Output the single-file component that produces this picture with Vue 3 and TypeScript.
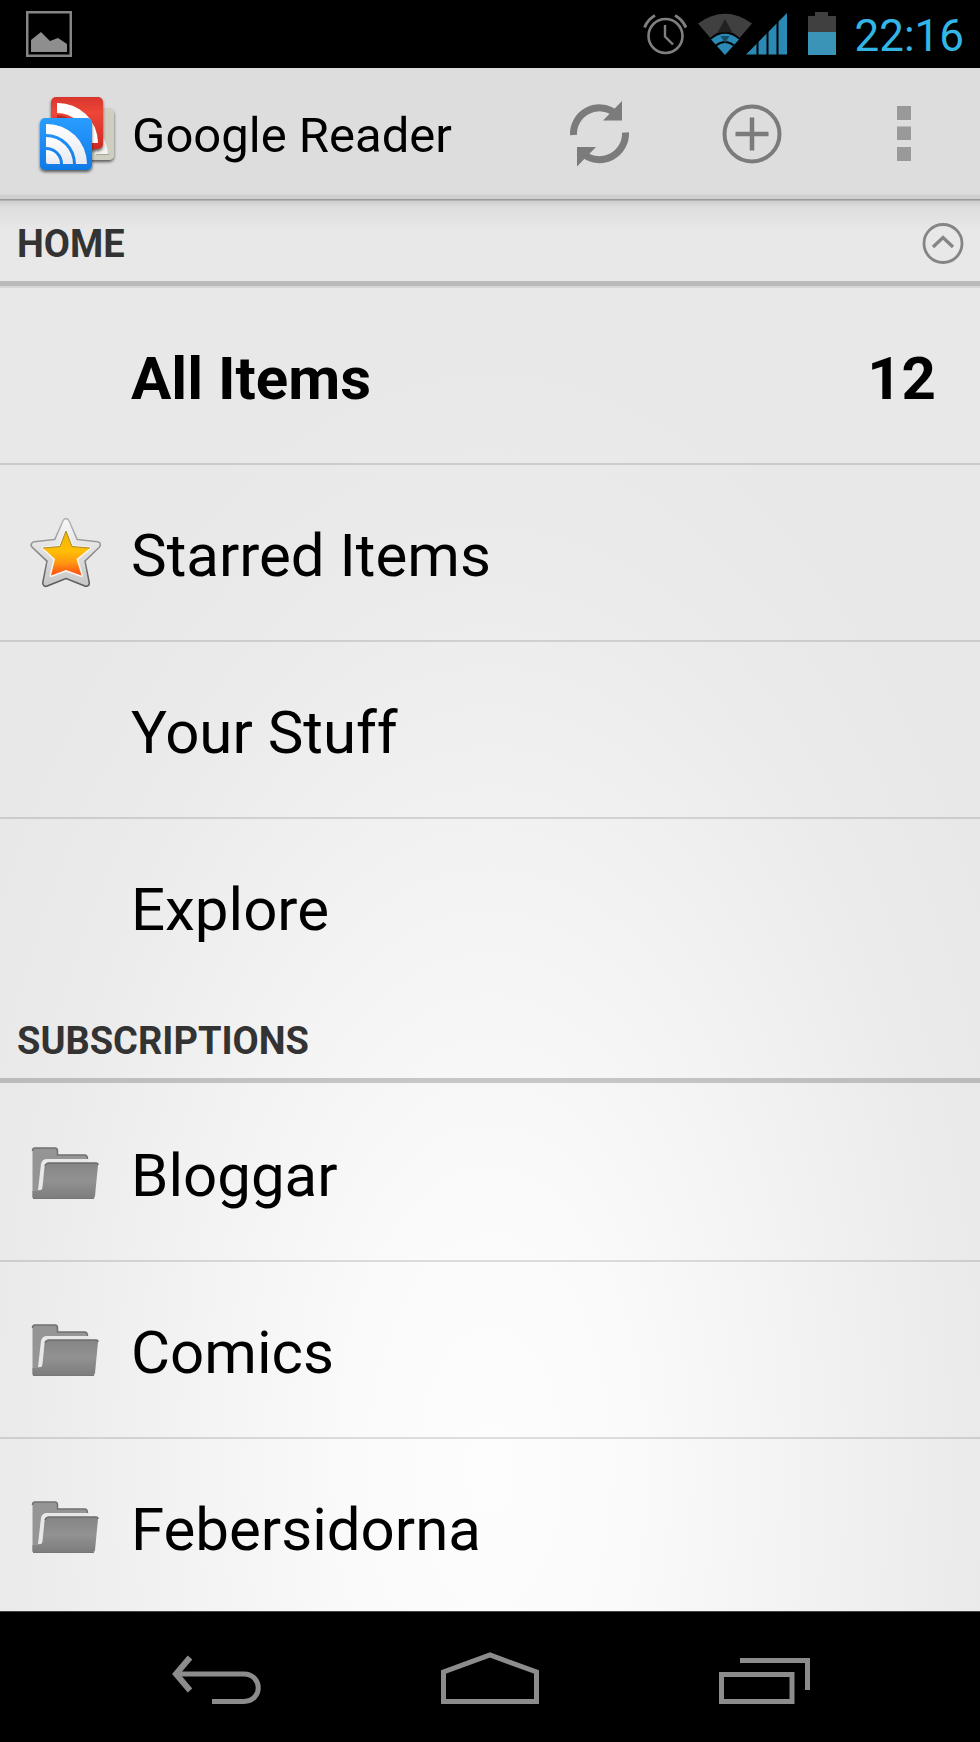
<script setup lang="ts">
interface Entry {
  label: string
  icon?: 'star' | 'folder'
  count?: number
}

interface Section {
  id: string
  title: string
  collapsible: boolean
  entries: Entry[]
}

const sections: Section[] = [
  {
    id: 'home',
    title: 'HOME',
    collapsible: true,
    entries: [
      { label: 'All Items', count: 12 },
      { label: 'Starred Items', icon: 'star' },
      { label: 'Your Stuff' },
      { label: 'Explore' },
    ],
  },
  {
    id: 'subscriptions',
    title: 'SUBSCRIPTIONS',
    collapsible: false,
    entries: [
      { label: 'Bloggar', icon: 'folder' },
      { label: 'Comics', icon: 'folder' },
      { label: 'Febersidorna', icon: 'folder' },
    ],
  },
]
</script>

<template>
  <div class="screen">
    <div class="status-bar">
      <svg class="picture" width="46" height="46" viewBox="0 0 46 46" aria-hidden="true">
        <rect x="1.25" y="1.25" width="43.5" height="43.5" fill="none" stroke="#858585" stroke-width="2.5" />
        <path d="M5 41V29l10-8 9 9 8-3 9 6v8z" fill="#8e8e8e" />
      </svg>
      <div class="status-icons">
        <svg width="44" height="44" viewBox="0 0 44 44" fill="none" stroke="#7f7f7f" aria-hidden="true">
          <circle cx="22.500" cy="24" r="17" stroke-width="2.600" />
          <path d="M22 13v11.500l8 8" stroke-width="2.400" />
          <path d="M1.500 15.500Q5 7 12 3.500M43 15.500Q39 7 32 3.500" stroke-width="3" />
        </svg>
        <svg width="89" height="44" viewBox="0 0 89 44" aria-hidden="true">
          <path d="M0 11.500Q27-8 54 11.500L27 43z" fill="#404040" />
          <path d="M11.500 26.500Q27 12 42.500 26.500L27 43z" fill="#000" />
          <path d="M13 27.500Q27 16 41 27.500L27 43z" fill="#2a8ab5" />
          <path d="M18 33.500Q27 26.500 36 33.500" fill="none" stroke="#000" stroke-width="2" />
          <path d="M27 7l7.500 13.500h-15z" fill="#222" />
          <path d="M22.500 24h9L27 31z" fill="#174d66" />
          <path d="M48 42.500L89 1v41.500z" fill="#2a8ab5" />
          <path d="M59.500 25v19M69.500 14v30M79.500 4v40" stroke="#000" stroke-width="2" />
        </svg>
        <svg class="battery" width="28" height="44" viewBox="0 0 28 44" aria-hidden="true">
          <path d="M0 4h7V0h13v4h8v17H0z" fill="#404040" />
          <path d="M0 20h28v23H0z" fill="#3994b8" />
        </svg>
        <time class="clock">22:16</time>
      </div>
    </div>

    <header class="action-bar">
      <svg class="logo" width="90" height="90" viewBox="0 0 90 90" aria-hidden="true">
        <defs>
          <linearGradient id="logo-red" x2="0" y2="1">
            <stop offset="0" stop-color="#d8352d" />
            <stop offset="0.300" stop-color="#ee4638" />
            <stop offset="1" stop-color="#cf2a22" />
          </linearGradient>
          <linearGradient id="logo-blue" x2="0" y2="1">
            <stop offset="0" stop-color="#2a9dff" />
            <stop offset="1" stop-color="#1079e6" />
          </linearGradient>
          <linearGradient id="logo-wave" x2="0" y2="1">
            <stop offset="0" stop-color="#fff" />
            <stop offset="1" stop-color="#e6e8ee" />
          </linearGradient>
          <filter id="logo-shadow" x="-20%" y="-20%" width="140%" height="150%">
            <feDropShadow dx="0" dy="2" stdDeviation="1.500" flood-opacity="0.600" />
          </filter>
        </defs>
        <g filter="url(#logo-shadow)">
          <rect x="33" y="19" width="52" height="52" rx="5" fill="#d0cec0" />
        </g>
        <path d="M70 42q8 10 9 23H66z" fill="#f3f3f0" />
        <path d="M67 65.500h13" stroke="#a8a698" />
        <g filter="url(#logo-shadow)">
          <rect x="22" y="8" width="52" height="52" rx="5" fill="url(#logo-red)" />
        </g>
        <path d="M28 14a40 40 0 0 1 41 40h-11A30 30 0 0 0 28 24z" fill="#fff" />
        <path d="M28 26q9 0 17 7H28z" fill="#b92c25" />
        <g filter="url(#logo-shadow)">
          <rect x="11" y="29" width="52" height="52" rx="5" fill="url(#logo-blue)" />
        </g>
        <g fill="url(#logo-wave)">
          <path d="M17 35a40 40 0 0 1 41 40H47A30 30 0 0 0 17 45z" />
          <path d="M17 48a27 27 0 0 1 27 27H34A17 17 0 0 0 17 58z" />
          <path d="M17 61a14 14 0 0 1 14 14H19q-2 0-2-2z" />
        </g>
      </svg>
      <h1 class="title">Google Reader</h1>
      <button class="action" type="button" aria-label="Refresh">
        <svg width="70" height="70" viewBox="0 0 70 70" aria-hidden="true">
          <g id="refresh-half">
            <path d="M8.500 36A26 26 0 0 1 50 14" fill="none" stroke="#7b7b7b" stroke-width="7" />
            <path d="M57 2v19.500H38z" fill="#7b7b7b" />
          </g>
          <use href="#refresh-half" transform="rotate(180 34.500 34.750)" />
        </svg>
      </button>
      <button class="action" type="button" aria-label="Add subscription">
        <svg width="60" height="60" viewBox="0 0 60 60" fill="none" stroke="#7b7b7b" aria-hidden="true">
          <circle cx="30" cy="30" r="27.500" stroke-width="4" />
          <path d="M13.500 30h33M30 13.500v33" stroke-width="4.500" />
        </svg>
      </button>
      <button class="action" type="button" aria-label="More options">
        <svg width="14" height="55" viewBox="0 0 14 55" fill="#999" aria-hidden="true">
          <path d="M0 0h14v14H0zM0 20.500h14v13.500H0zM0 41h14v14H0z" />
        </svg>
      </button>
    </header>

    <main class="content">
      <section v-for="section in sections" :key="section.id" :aria-labelledby="section.id">
        <div class="section-head" :class="{ lined: section.collapsible }">
          <h2 :id="section.id" class="section-title">{{ section.title }}</h2>
          <button v-if="section.collapsible" class="collapse" type="button" aria-label="Collapse">
            <svg width="42" height="42" viewBox="0 0 42 42" fill="none" stroke="#858585" aria-hidden="true">
              <circle cx="21" cy="20.500" r="19" stroke-width="2.800" />
              <path d="M11 24L21 14.500 31 24" stroke-width="3.400" />
            </svg>
          </button>
        </div>
        <ul class="entries">
          <li v-for="entry in section.entries" :key="entry.label" class="entry">
            <a class="entry-link" :class="{ unread: entry.count }" href="#">
              <span class="entry-icon">
                <svg v-if="entry.icon === 'star'" width="72" height="72" viewBox="0 0 72 72" aria-hidden="true">
                  <defs>
                    <linearGradient id="star-fill" x2="0" y2="1">
                      <stop offset="0" stop-color="#f0b400" />
                      <stop offset="0.450" stop-color="#ffbe05" />
                      <stop offset="0.700" stop-color="#ff9a10" />
                      <stop offset="1" stop-color="#ff4a10" />
                    </linearGradient>
                    <linearGradient id="star-rim" x2="0" y2="1">
                      <stop offset="0" stop-color="#b4b4b4" />
                      <stop offset="0.500" stop-color="#8a8a8a" />
                      <stop offset="1" stop-color="#5c5c5c" />
                    </linearGradient>
                    <linearGradient id="star-body" x2="0" y2="1">
                      <stop offset="0" stop-color="#f6f6f6" />
                      <stop offset="1" stop-color="#c8c8c8" />
                    </linearGradient>
                  </defs>
                  <g stroke-linejoin="round">
                    <path d="M36 5L45 25.500 67 28 51.500 43 56 66 36 58 16 66 20.500 43 4.500 28 27 25.500z" fill="url(#star-rim)" stroke="url(#star-rim)" stroke-width="8" />
                    <path d="M36 5L45 25.500 67 28 51.500 43 56 66 36 58 16 66 20.500 43 4.500 28 27 25.500z" fill="url(#star-body)" stroke="url(#star-body)" stroke-width="5" />
                    <path d="M36 14L42 29.500 60 31 46.500 42 51.500 58.500 36 53 21 58.500 25 42 13 31 30 29.500z" fill="#fff" stroke="#f8f4f0" stroke-width="3" />
                  </g>
                  <path d="M36 14L42 29.500 60 31 46.500 42 51.500 58.500 36 53 21 58.500 25 42 13 31 30 29.500z" fill="url(#star-fill)" />
                  <path d="M13 31l17-1.500L36 14l6 15.500 18 1.500" fill="none" stroke="#a88a30" stroke-width="1" />
                </svg>
                <svg v-else-if="entry.icon === 'folder'" width="72" height="72" viewBox="0 0 72 72" aria-hidden="true">
                  <defs>
                    <linearGradient id="folder-front" x2="0" y2="1">
                      <stop offset="0" stop-color="#858585" />
                      <stop offset="0.500" stop-color="#929292" />
                      <stop offset="1" stop-color="#7d7d7d" />
                    </linearGradient>
                  </defs>
                  <path d="M2.500 60V13q0-2 2-2h20.500q2.500 0 2.500 3v4h27q3 0 3 5v37z" fill="#959595" />
                  <path d="M2.500 14q0-3 2.500-3h20q2.500 0 2.500 3v4h27q3 0 3 4" fill="none" stroke="#707070" stroke-width="1.500" />
                  <path d="M8 53L11 27q1-5 6-5h42v5H17.500l-4.500 26z" fill="#e8e8e8" />
                  <path d="M2.500 61V54h5.500q4 0 4.500-4l2-20q.5-4 4-4H66q2 0 2 2l-3 31q0 2-2 2z" fill="url(#folder-front)" />
                  <path d="M15 29q1-3 4-3h47q2 0 2 2" fill="none" stroke="#6c6c6c" stroke-width="1.500" />
                  <path d="M3 61.500h61" stroke="#767676" stroke-width="1" />
                </svg>
              </span>
              <span class="entry-label">{{ entry.label }}</span>
              <span v-if="entry.count" class="entry-count">{{ entry.count }}</span>
            </a>
          </li>
        </ul>
      </section>
    </main>

    <nav class="nav-bar" aria-label="System">
      <button class="nav-button" type="button" aria-label="Back">
        <svg width="90" height="52" viewBox="0 0 90 52" fill="none" stroke="#8c8c8c" aria-hidden="true">
          <path d="M6 22H73C92 22.500 92 49 73 49.500H41" stroke-width="5" />
          <path d="M19 5.500L5 22 19 38.500" stroke-width="6" />
        </svg>
      </button>
      <button class="nav-button" type="button" aria-label="Home">
        <svg width="98" height="52" viewBox="0 0 98 52" fill="none" stroke="#8c8c8c" aria-hidden="true">
          <path d="M2.500 49.500V20L49 3 95.500 20V49.500z" stroke-width="5" />
        </svg>
      </button>
      <button class="nav-button" type="button" aria-label="Recent apps">
        <svg width="92" height="52" viewBox="0 0 92 52" fill="none" stroke="#8c8c8c" stroke-width="5" aria-hidden="true">
          <path d="M3.500 22.500H74V49.500H3.500z" />
          <path d="M22 8.500H89.500V38" />
        </svg>
      </button>
    </nav>
  </div>
</template>

<style>
body {
  background: #000;
}
</style>

<style scoped>
.screen {
  display: flex;
  flex-direction: column;
  height: 100vh;
  font-family: Roboto, "Liberation Sans", sans-serif;
  color: #000;
  background: #e8e8e8;
}

svg {
  display: block;
  flex: none;
}

button {
  display: flex;
  align-items: center;
  justify-content: center;
  padding: 0;
  border: 0;
  background: none;
  cursor: pointer;
}

.status-bar {
  display: flex;
  flex: none;
  align-items: center;
  justify-content: space-between;
  height: 68px;
  padding: 0 16px 0 26px;
  background: #000;
}

.status-icons {
  display: flex;
  align-items: center;
  gap: 11px;
}

.battery {
  margin: 0 7px 0 10px;
}

.clock {
  padding-top: 4px;
  font-size: 44px;
  line-height: 52px;
  color: #33b5e5;
}

.action-bar {
  display: flex;
  flex: none;
  align-items: center;
  height: 131px;
  padding-left: 29px;
  background: linear-gradient(#ddd 126px, #cfcfcf 127px);
}

.title {
  flex: 1;
  margin: 0;
  padding: 4px 0 0 13px;
  font-size: 49px;
  font-weight: 400;
  line-height: 58px;
  white-space: nowrap;
}

.action {
  width: 152px;
  height: 131px;
}

.content {
  flex: 1;
  min-height: 0;
  overflow: hidden;
  background:
    linear-gradient(#999 1px, #ccc 2px, #dedede 8px, rgba(232, 232, 232, 0) 32px) top / 100% 32px no-repeat,
    radial-gradient(60% 80% at 50% 90%, #fdfdfd, #fafafa 25%, #f2f2f2 55%, #ebebeb 80%, #e8e8e8);
}

.section-head {
  display: flex;
  align-items: center;
  justify-content: space-between;
  box-sizing: border-box;
  height: 89px;
  padding: 8px 16px 7px 17px;
  background: linear-gradient(rgba(0, 0, 0, 0.2), rgba(0, 0, 0, 0.2)) 0 82px / 100% 5px no-repeat;
}

.lined {
  border-bottom: 2px solid rgba(0, 0, 0, 0.08);
  padding-bottom: 5px;
}

.section-title {
  margin: 0;
  font-size: 38px;
  font-weight: 700;
  line-height: 44px;
  color: #333;
}

.entries {
  margin: 0;
  padding: 0;
  list-style: none;
}

.entry {
  border-bottom: 2px solid rgba(0, 0, 0, 0.12);
}

.entry:last-child {
  border-bottom-color: transparent;
}

.entry-link {
  display: flex;
  align-items: center;
  height: 175px;
  padding-right: 44px;
  font-size: 60px;
  line-height: 70px;
  color: inherit;
  text-decoration: none;
}

.unread {
  font-weight: 700;
}

.entry-icon {
  display: flex;
  flex: none;
  justify-content: center;
  width: 131px;
}

.entry-label {
  flex: 1;
  padding-top: 6px;
}

.entry-count {
  padding-top: 6px;
}

.nav-bar {
  display: flex;
  flex: none;
  justify-content: center;
  box-sizing: border-box;
  height: 131px;
  border-top: 1px solid #444;
  background: #000;
}

.nav-button {
  width: 28%;
  padding-top: 2px;
}
</style>
